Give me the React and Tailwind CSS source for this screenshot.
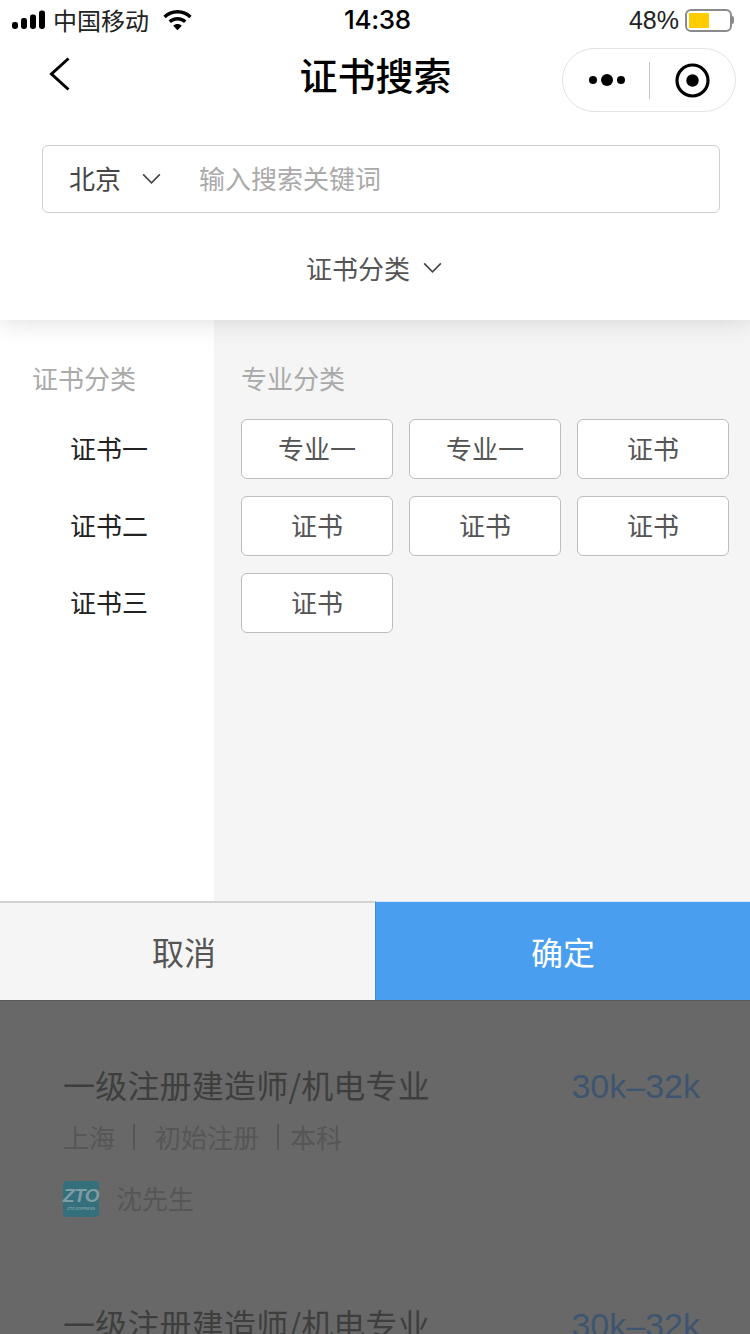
import React from "react";

const cjk = "font-['Noto_Sans_CJK_SC','Liberation_Sans',sans-serif]";

function Chevron({ className }) {
  return (
    <svg className={className} viewBox="0 0 20 12" fill="none" stroke="currentColor" strokeWidth="1.7">
      <path d="M1.2 1.2 10 10 18.8 1.2" />
    </svg>
  );
}

function StatusBar() {
  return (
    <div className="h-[40px] shrink-0 flex items-center relative text-black bg-white">
      <svg className="ml-[12px] w-[34px] h-[20px]" viewBox="0 0 34 20" fill="currentColor">
        <rect x="0" y="12" width="6" height="7" rx="2.4" />
        <rect x="9" y="8" width="6" height="11" rx="2.4" />
        <rect x="18" y="4.5" width="6" height="14.5" rx="2.4" />
        <rect x="27" y="0.5" width="6" height="18.5" rx="2.4" />
      </svg>
      <span className="ml-[7px] text-[24px] leading-[32px] text-[#222]">中国移动</span>
      <svg className="ml-[14px] w-[29px] h-[21px]" viewBox="0 0 29 21" fill="currentColor">
        <path d="M14.5 0C9 0 4 2.2.4 5.8l2.3 2.5C5.7 5.3 9.9 3.4 14.5 3.4s8.8 1.9 11.8 4.9l2.3-2.5C25 2.2 20 0 14.5 0Z" />
        <path d="M14.5 7c-3.4 0-6.6 1.4-8.9 3.6l2.4 2.5c1.7-1.6 4-2.7 6.5-2.7s4.8 1 6.5 2.7l2.4-2.5C21.1 8.4 17.9 7 14.5 7Z" />
        <path d="M14.5 14c-1.7 0-3.2.7-4.3 1.7l4.3 4.6 4.3-4.6c-1.1-1-2.6-1.7-4.3-1.7Z" />
      </svg>
      <span className="absolute left-[344px] top-[4px] text-[26px] leading-[32px] font-medium font-['Inter',sans-serif] tracking-[-0.3px]">14:38</span>
      <span className="ml-auto text-[25px] leading-[32px] text-[#222] font-['Liberation_Sans',sans-serif]">48%</span>
      <div className="ml-[6px] mr-[16px] flex items-center">
        <div className="w-[47px] h-[23px] rounded-[6px] border-2 border-[#8a8a8a] p-[2px] bg-white">
          <div className="w-[20px] h-full bg-[#ffcc00] rounded-[1px]" />
        </div>
        <div className="w-[2px] h-[8px] bg-[#8a8a8a] rounded-r-[2px]" />
      </div>
    </div>
  );
}

function NavBar() {
  return (
    <div className="h-[86px] shrink-0 bg-white flex items-start relative z-20">
      <svg className="mt-[16px] ml-[48px] w-[24px] h-[36px] text-black" viewBox="0 0 24 36" fill="none" stroke="currentColor" strokeWidth="3">
        <path d="M20.5 2.5 3.5 18 20.5 33.5" />
      </svg>
      <div className="absolute left-[1px] right-0 top-[8px] text-center text-[38px] leading-[52px] font-medium text-black">证书搜索</div>
      <div className="ml-auto mt-[8px] mr-[14px] w-[174px] h-[64px] rounded-full border border-[#e3e3e3] flex items-center bg-white">
        <div className="w-[86px] pl-[26px] flex items-center gap-[4px]">
          <span className="w-[8px] h-[8px] rounded-full bg-black" />
          <span className="w-[12px] h-[12px] rounded-full bg-black" />
          <span className="w-[8px] h-[8px] rounded-full bg-black" />
        </div>
        <div className="w-[1px] h-[37px] bg-[#c4c4c4]" />
        <div className="flex-1 flex justify-center">
          <svg className="w-[35px] h-[35px]" viewBox="0 0 35 35">
            <circle cx="17.5" cy="17.5" r="15.5" fill="none" stroke="black" strokeWidth="3.2" />
            <circle cx="17.5" cy="17.5" r="6.2" fill="black" />
          </svg>
        </div>
      </div>
    </div>
  );
}

function SearchPanel() {
  return (
    <div className="h-[194px] shrink-0 bg-white relative z-10 shadow-[0_2px_24px_rgba(0,0,0,0.13)] pl-[42px] pr-[30px] pt-[19px]">
      <div className="h-[68px] rounded-[6px] border border-[#cfcfcf] flex items-center pl-[26px] text-[26px]">
        <span className="text-[#444] w-[53px] whitespace-nowrap -mt-[4px]">北京</span>
        <Chevron className="ml-[20px] w-[19px] h-[12px] text-[#444]" />
        <span className="ml-[38px] text-[#aaaaaa] whitespace-nowrap -mt-[4px]">输入搜索关键词</span>
      </div>
      <div className="mt-[30px] h-[50px] pr-[14px] flex items-center justify-center text-[26px] text-[#555]">
        <span className="whitespace-nowrap -mt-[2px]">证书分类</span>
        <Chevron className="ml-[13px] w-[19px] h-[12px] text-[#444]" />
      </div>
    </div>
  );
}

const tags = ["专业一", "专业一", "证书", "证书", "证书", "证书", "证书"];

function Filter() {
  return (
    <div className="h-[581px] shrink-0 flex">
      <div className="w-[214px] bg-white pt-[35px]">
        <div className="pl-[32px] text-[26px] leading-[46px] text-[#aaaaaa]">证书分类</div>
        <div className="mt-[24px] flex flex-col gap-[31px] pl-[70px] text-[26px] leading-[46px] text-[#222]">
          <div>证书一</div>
          <div>证书二</div>
          <div>证书三</div>
        </div>
      </div>
      <div className="flex-1 bg-[#f5f5f5] pl-[27px] pt-[35px]">
        <div className="text-[26px] leading-[46px] text-[#aaaaaa]">专业分类</div>
        <div className="mt-[18px] grid grid-cols-[152px_152px_152px] gap-x-[16px] gap-y-[17px]">
          {tags.map((t, i) => (
            <div key={i} className="h-[60px] pb-[4px] rounded-[6px] border border-[#bdbdbd] bg-white flex items-center justify-center text-[26px] text-[#555]">
              {t}
            </div>
          ))}
        </div>
      </div>
    </div>
  );
}

function Actions() {
  return (
    <div className="h-[99px] shrink-0 flex text-[32px]">
      <div className="w-[375px] bg-[#f5f5f5] border-t-2 border-[#d2d2d2] border-r border-r-white flex items-center justify-center text-[#555]">
        <span className="-mt-[1px] -ml-[6px]">取消</span>
      </div>
      <div className="w-[375px] bg-[#4a9ef0] border-t border-t-[#d8e8f8] border-l border-l-[#3a8ae0] flex items-center justify-center text-white">
        <span className="-mt-[1px]">确定</span>
      </div>
    </div>
  );
}

function Job({ last }) {
  return (
    <div className={last ? "" : "h-[239px]"}>
      <div className="flex items-center justify-between h-[50px]">
        <span className="text-[32px] tracking-[0.2px] text-[#3e3e3e] whitespace-nowrap -mt-[4px]">一级注册建造师/机电专业</span>
        <span className="text-[34px] text-[#3e5570] font-['Liberation_Sans',sans-serif] whitespace-nowrap">30k–32k</span>
      </div>
      {!last && (
        <>
          <div className="mt-[3px] h-[46px] flex items-center text-[26px] text-[#565656] whitespace-nowrap">
            <span className="-mt-[2px] w-[51px]">上海</span>
            <span className="ml-[19px] w-[2px] h-[26px] bg-[#565656]" />
            <span className="ml-[20px] -mt-[2px]">初始注册</span>
            <span className="ml-[18px] w-[2px] h-[26px] bg-[#565656]" />
            <span className="ml-[11px] -mt-[2px]">本科</span>
          </div>
          <div className="mt-[21px] flex items-center">
            <div className="w-[36px] h-[36px] rounded-[4px] bg-[#33707c] flex flex-col items-center justify-center">
              <span className="text-[19px] leading-[17px] font-bold italic tracking-[-0.5px] text-[#7f9ca2] font-['Liberation_Sans',sans-serif]">ZTO</span>
              <span className="mt-[2px] text-[4px] leading-[5px] font-bold italic text-[#7f9ca2] font-['Liberation_Sans',sans-serif] whitespace-nowrap">ZTO EXPRESS</span>
            </div>
            <span className="ml-[17px] text-[26px] leading-[36px] text-[#565656] -mt-[3px]">沈先生</span>
          </div>
        </>
      )}
    </div>
  );
}

export default function App() {
  return (
    <div className={`w-[750px] h-[1334px] overflow-hidden flex flex-col bg-white ${cjk}`}>
      <StatusBar />
      <NavBar />
      <SearchPanel />
      <Filter />
      <Actions />
      <div className="flex-1 bg-[#686868] border-t border-[#5a5a5a] pl-[63px] pr-[50px] pt-[60px] overflow-hidden">
        <Job />
        <Job last />
      </div>
    </div>
  );
}
